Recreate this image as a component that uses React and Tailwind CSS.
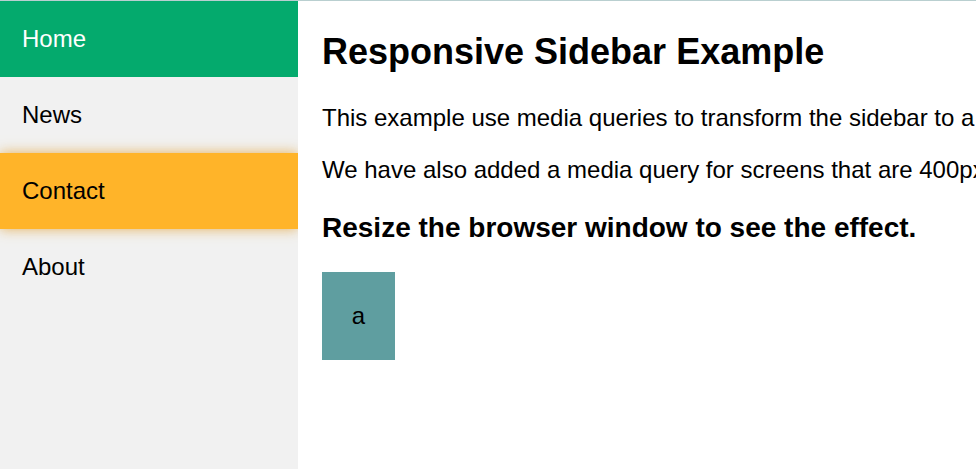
import React from "react";

const links = [
  { label: "Home", className: "bg-[#04aa6d] text-white" },
  { label: "News", className: "text-black" },
  {
    label: "Contact",
    className:
      "relative z-10 bg-[#ffb429] text-black shadow-[0_0_12px_rgba(226,160,50,0.8)]",
  },
  { label: "About", className: "text-black" },
];

const App = () => {
  return (
    <div className="flex h-[469px] w-[976px] flex-col overflow-hidden bg-white font-['Liberation_Sans',Arial,sans-serif]">
      {/* thin frame line on top */}
      <div className="h-px w-full shrink-0 bg-[#b9cfd0]" />

      <div className="flex min-h-0 flex-1">
        {/* sidebar, glow of active link stays inside */}
        <nav className="w-[298px] shrink-0 overflow-hidden bg-[#f1f1f1]">
          {links.map((l) => (
            <a
              key={l.label}
              href="#"
              className={`block h-[76px] pl-[22px] pt-[24px] text-[24px] leading-[28px] no-underline ${l.className}`}
            >
              {l.label}
            </a>
          ))}
        </nav>

        {/* content */}
        <main className="min-w-0 flex-1 whitespace-nowrap pl-[24px] text-black">
          <h1 className="mt-[30px] text-[36px] font-bold leading-[41px]">
            Responsive Sidebar Example
          </h1>
          <p className="mt-[32px] text-[24px] leading-[28px]">
            This example use media queries to transform the sidebar to a top
            navigation bar when the screen size is 700px or less.
          </p>
          <p className="mt-[24px] text-[24px] leading-[28px]">
            We have also added a media query for screens that are 400px or
            less, which will vertically stack and center the navigation links.
          </p>
          <h3 className="mt-[28px] text-[28px] font-bold leading-[32px]">
            Resize the browser window to see the effect.
          </h3>
          <div className="mt-[28px] flex h-[88px] w-[73px] items-center justify-center bg-[#5f9ea0] text-[24px]">
            a
          </div>
        </main>
      </div>
    </div>
  );
};

export default App;
